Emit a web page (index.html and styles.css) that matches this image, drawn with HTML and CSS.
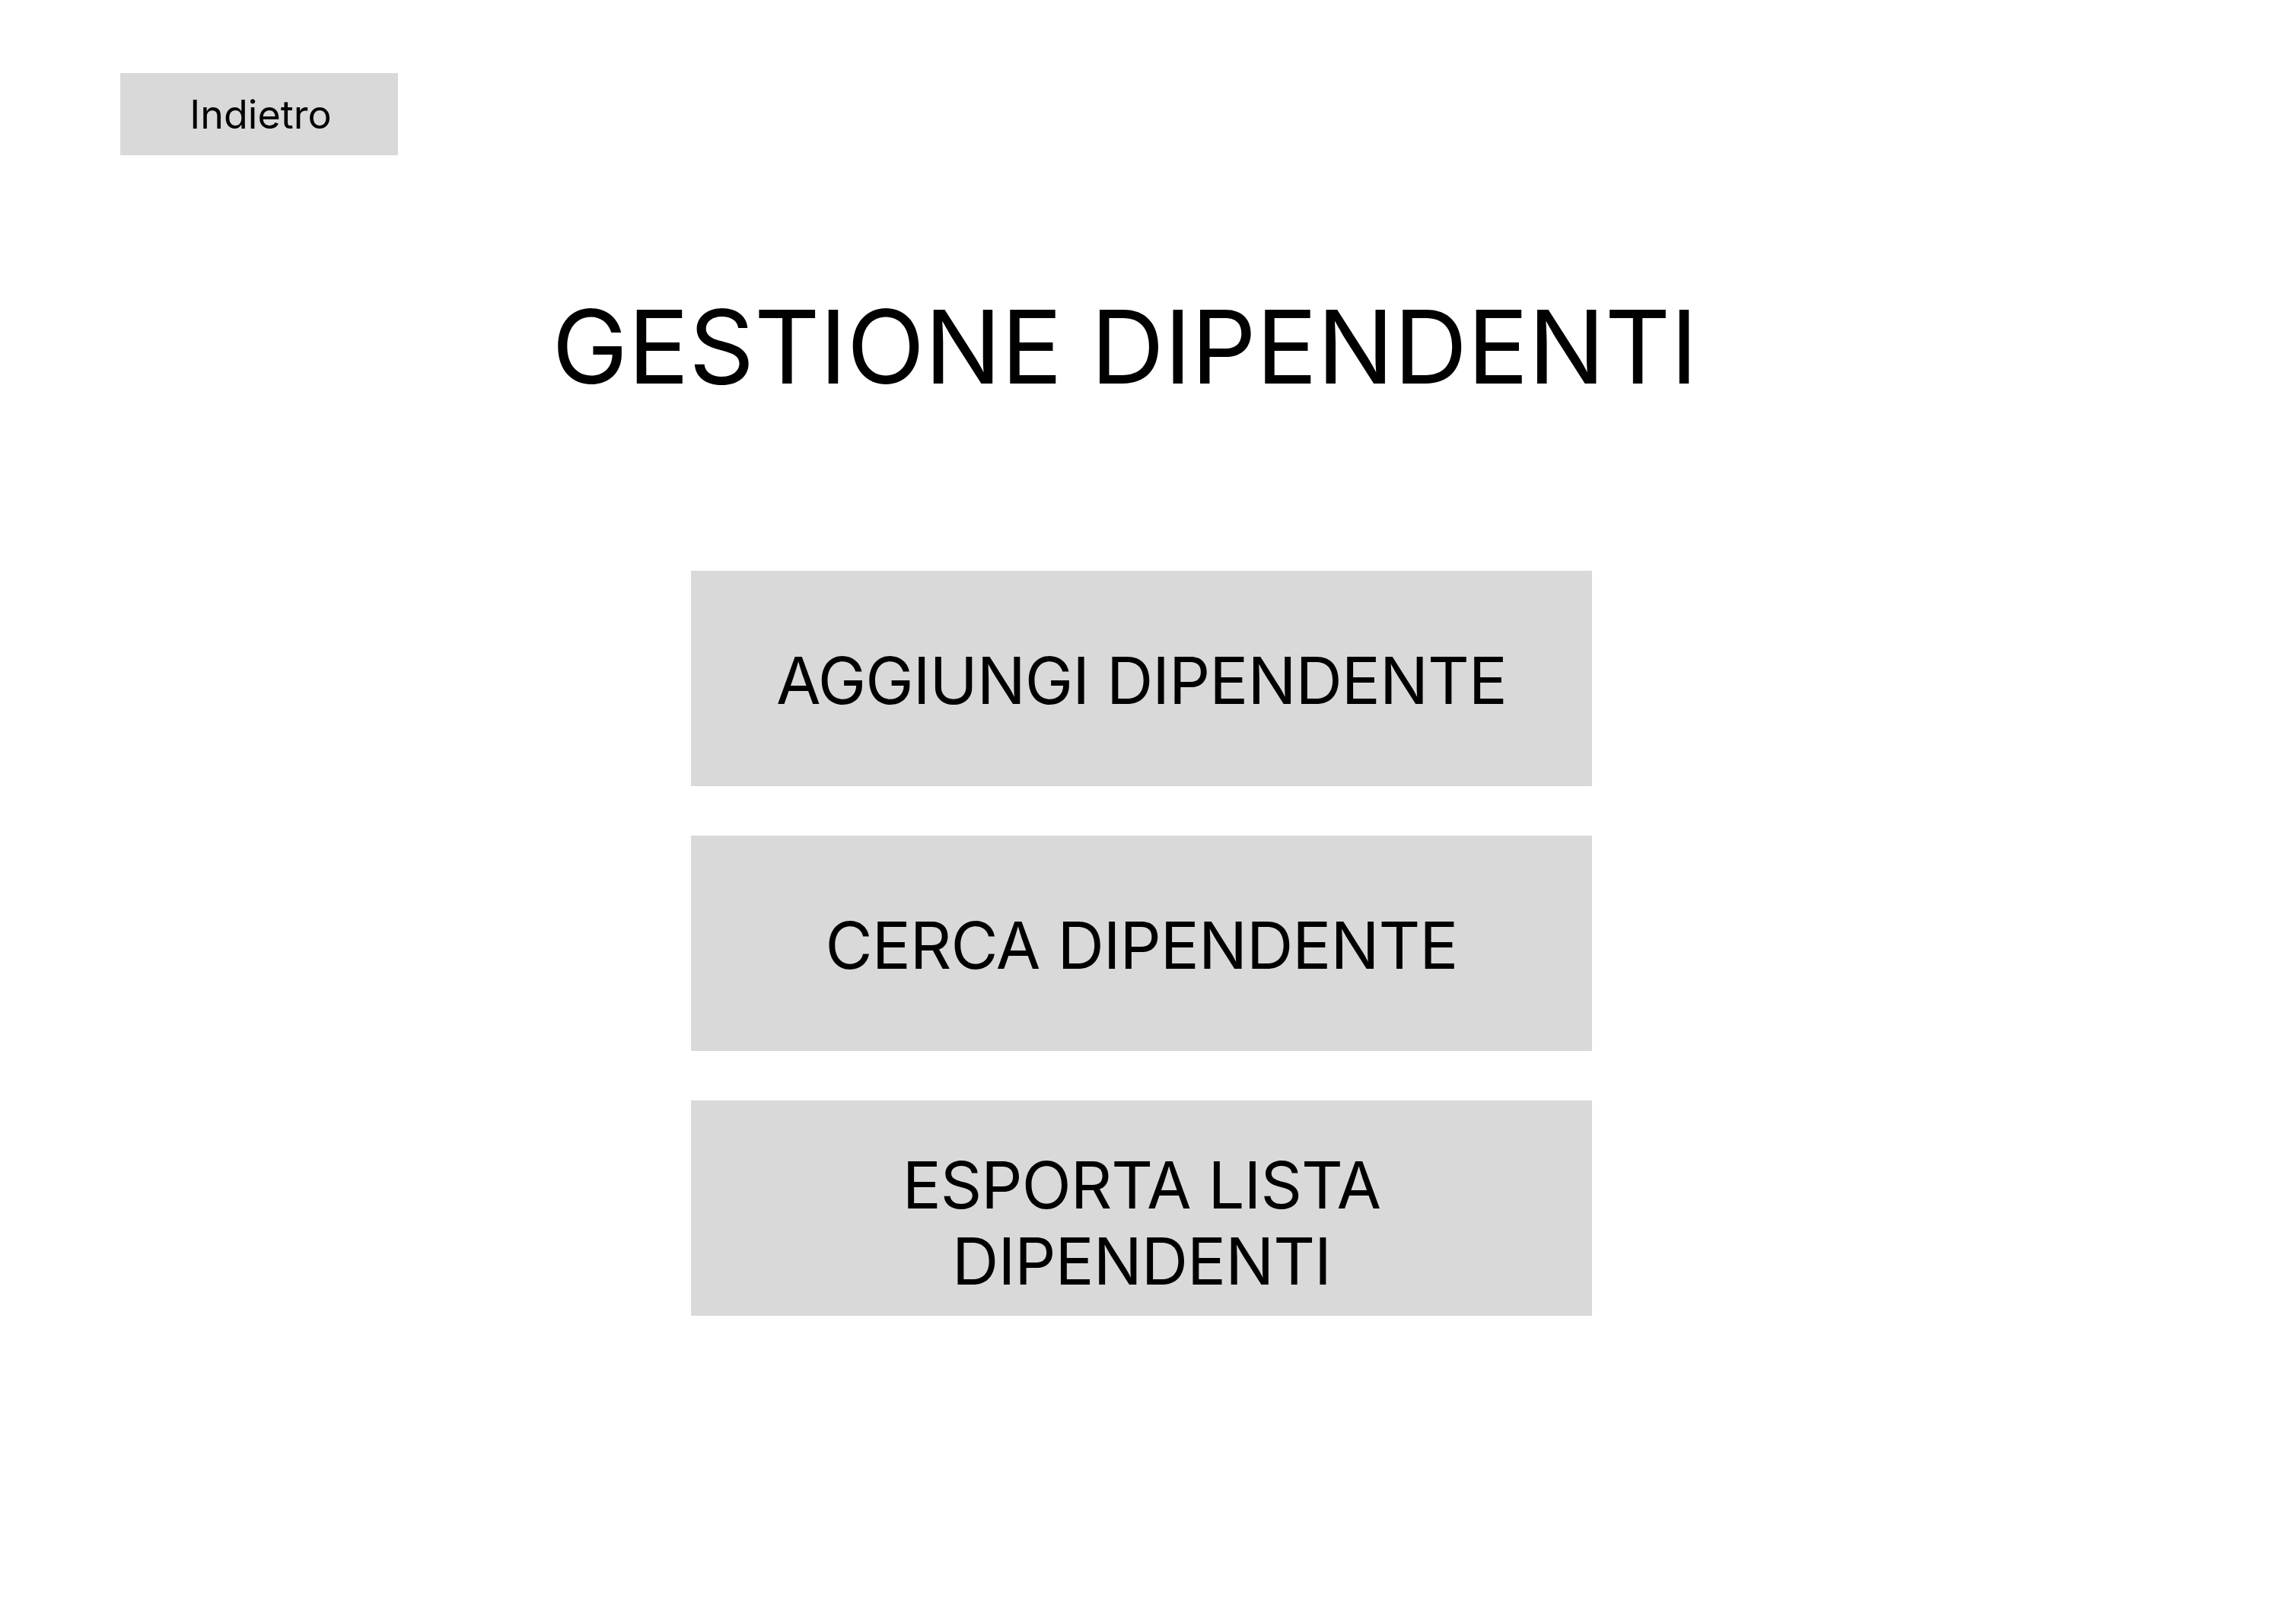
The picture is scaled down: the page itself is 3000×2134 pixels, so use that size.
FILE: index.html
```html
<!DOCTYPE html>
<html>
  <head>
    <meta charset="UTF-8">
    <meta name="viewport" content="width=device-width, initial-scale=1.0">
    <title>Gestione Dipendenti</title>
    <link rel="stylesheet" href="styles.css">
  </head>
  <body>

    <div class="topbar">
      <button type="button" class="back-btn">Indietro</button>
    </div>

    <h1 class="page-title">GESTIONE DIPENDENTI</h1>

    <div class="menu">
      <button type="button" class="menu-btn">AGGIUNGI DIPENDENTE</button>
      <button type="button" class="menu-btn">CERCA DIPENDENTE</button>
      <button type="button" class="menu-btn menu-btn-wrap">ESPORTA LISTA<br>DIPENDENTI</button>
    </div>

  </body>
</html>
```

FILE: styles.css
```css
body {
  font-family: Inter, 'Noto Sans', sans-serif;
  margin: 0;
  padding: 0;
  background-color: #fff;
  color: #000;
}

.topbar {
  display: flex;
  padding: 96px 0 0 158px;
}

.back-btn {
  width: 365px;
  height: 108px;
  background-color: #d9d9d9;
  border: none;
  font-family: inherit;
  font-size: 52px;
  color: #000;
  padding: 0 0 0 4px;
}

.page-title {
  margin: 170px 0 0;
  padding-right: 44px;
  text-align: center;
  font-size: 134px;
  font-weight: 400;
  line-height: 162px;
  letter-spacing: -0.3px;
}

.menu {
  display: flex;
  flex-direction: column;
  align-items: center;
  gap: 65px;
  margin-top: 214px;
}

.menu-btn {
  width: 1184px;
  height: 283px;
  display: flex;
  align-items: center;
  justify-content: center;
  background-color: #d9d9d9;
  border: none;
  font-family: inherit;
  font-size: 85px;
  line-height: 100px;
  letter-spacing: -1px;
  color: #000;
  padding: 6px 0 0;
}

.menu-btn-wrap {
  padding-top: 40px;
}
```
